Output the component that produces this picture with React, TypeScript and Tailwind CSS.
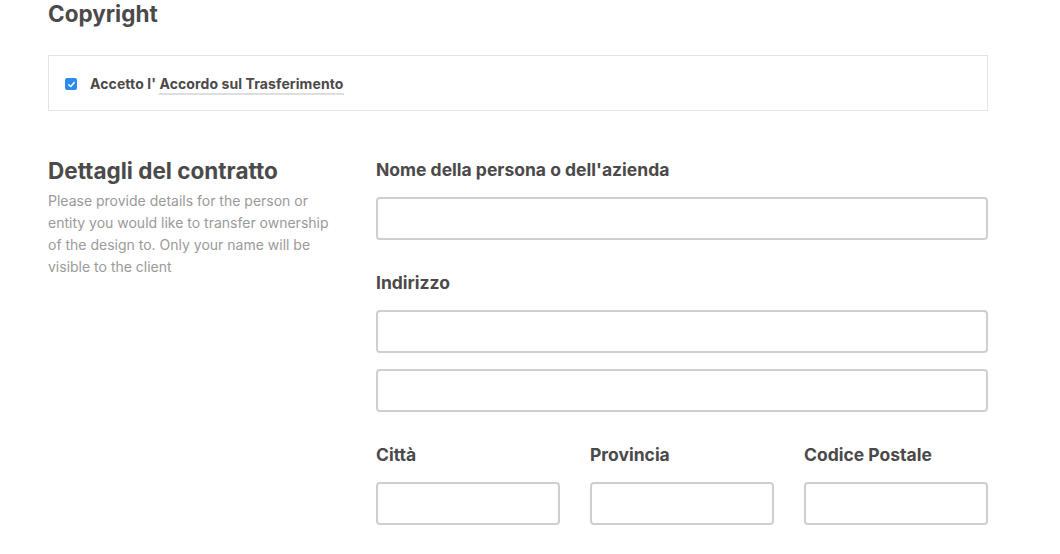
import React from "react";

const font = { fontFamily: 'Inter, "Liberation Sans", Arial, sans-serif' };

function Input({ className = "" }: { className?: string }) {
  return (
    <input
      type="text"
      className={`block h-[43px] rounded-[4px] border-2 border-[#cfcfcf] bg-white outline-none ${className}`}
    />
  );
}

function Label({ children }: { children: React.ReactNode }) {
  return (
    <div className="text-[17.5px] leading-[24px] font-bold text-[#4b4949]">
      {children}
    </div>
  );
}

export default function App() {
  return (
    <div className="min-h-[554px] w-[1060px] bg-white" style={font}>
      <div className="w-[940px] ml-[48px]">
        <h2 className="text-[22.5px] leading-[28px] font-bold text-[#4b4949]">
          Copyright
        </h2>
        <div className="mt-[27px] h-[56px] border border-[#e3e3e3] flex items-center pl-[16px] pt-[2px]">
          <span className="w-[12px] h-[12px] rounded-[2px] bg-[#2d8cf0] flex items-center justify-center">
            <svg width="9" height="9" viewBox="0 0 10 10">
              <path d="M2 5.2 L4.2 7.3 L8 2.8" fill="none" stroke="white" strokeWidth="1.6" strokeLinecap="round" strokeLinejoin="round" />
            </svg>
          </span>
          <span className="ml-[13px] text-[14px] leading-[20px] font-bold text-[#4b4949] tracking-[0.1px]">
            Accetto l'{" "}
            <span className="border-b-2 border-[#dedede] pb-[1px]">Accordo sul Trasferimento</span>
          </span>
        </div>

        <div className="mt-[46px] flex">
          <div className="w-[328px] shrink-0">
            <h3 className="text-[22.5px] leading-[28px] font-bold text-[#4b4949]">
              Dettagli del contratto
            </h3>
            <p className="mt-[5px] w-[290px] text-[14px] leading-[22px] text-[#9a9a9a]">
              Please provide details for the person or entity you would like to transfer ownership of the design to. Only your name will be visible to the client
            </p>
          </div>
          <div className="flex-1 pt-[1px]">
            <Label>Nome della persona o dell'azienda</Label>
            <Input className="mt-[15px] w-full" />
            <div className="mt-[31px]">
              <Label>Indirizzo</Label>
            </div>
            <Input className="mt-[15px] w-full" />
            <Input className="mt-[16px] w-full" />
            <div className="mt-[31px] flex gap-[30px]">
              {["Città", "Provincia", "Codice Postale"].map((l) => (
                <div key={l} className="flex-1">
                  <Label>{l}</Label>
                  <Input className="mt-[15px] w-full" />
                </div>
              ))}
            </div>
          </div>
        </div>
      </div>
    </div>
  );
}
